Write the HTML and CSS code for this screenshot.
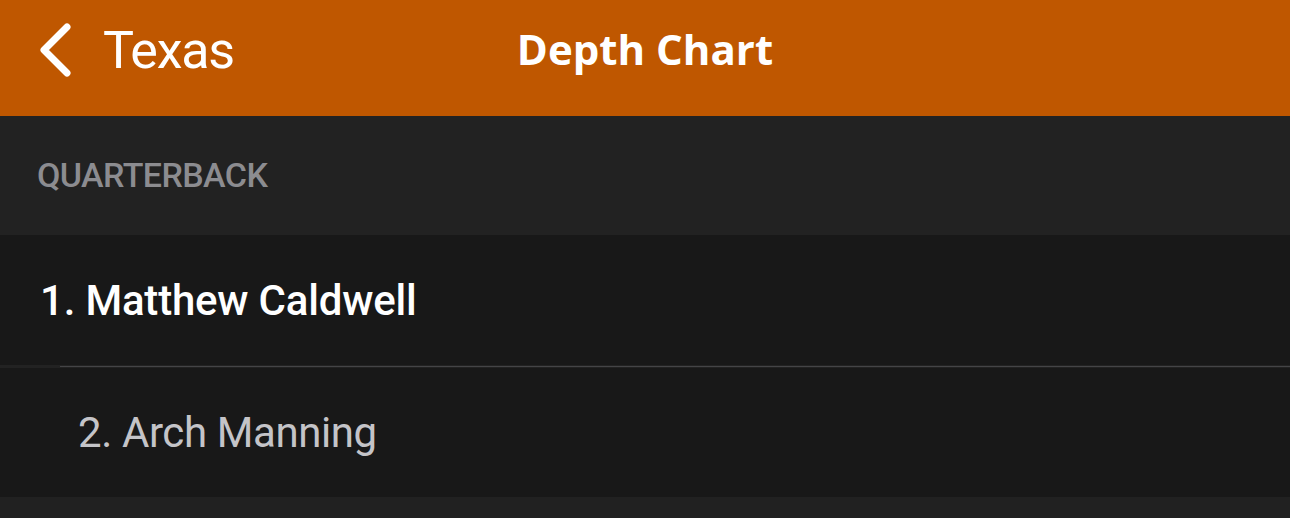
FILE: index.html
```html
<!DOCTYPE html>
<html lang="en">
<head>
<meta charset="utf-8">
<title>Depth Chart</title>
<link rel="stylesheet" href="styles.css">
</head>
<body>
<div class="screen">
  <header class="nav">
    <div class="nav-back">
      <svg class="chevron" width="40" height="60" viewBox="0 0 40 60" aria-hidden="true">
        <path d="M31 6 L8 29 L31 52" fill="none" stroke="#ffffff" stroke-width="7" stroke-linecap="round" stroke-linejoin="round"/>
      </svg>
      <span class="nav-back-label">Texas</span>
    </div>
    <h1 class="nav-title">Depth Chart</h1>
    <div class="nav-spacer"></div>
  </header>
  <div class="section-head">QUARTERBACK</div>
  <ul class="list">
    <li class="row row-first">1. Matthew Caldwell</li>
    <li class="sep"><span class="sep-line"></span></li>
    <li class="row row-second">2. Arch Manning</li>
  </ul>
  <div class="footer"></div>
</div>
</body>
</html>
```

FILE: styles.css
```css
* { box-sizing: border-box; }
html, body {
  margin: 0;
  padding: 0;
  background: #212121;
}
body {
  font-family: Roboto, "Noto Sans", "Liberation Sans", sans-serif;
  width: 1290px;
  height: 518px;
  overflow: hidden;
}
.screen {
  display: flex;
  flex-direction: column;
  height: 518px;
}
.nav {
  height: 116px;
  background: #bf5700;
  display: grid;
  grid-template-columns: 1fr auto 1fr;
  align-items: start;
  padding-top: 21px;
  color: #ffffff;
}
.nav-back {
  display: flex;
  align-items: flex-start;
  padding-left: 36px;
}
.chevron {
  display: block;
}
.nav-back-label {
  font-size: 52px;
  line-height: 60px;
  font-weight: 400;
  margin-left: 27px;
  letter-spacing: -1.2px;
}
.nav-title {
  margin: -2px 0 0 0;
  font-family: "Open Sans", Roboto, sans-serif;
  font-size: 42px;
  line-height: 60px;
  font-weight: 700;
  letter-spacing: 0;
}
.section-head {
  height: 119px;
  background: #222222;
  padding: 39px 0 0 37px;
  font-size: 34px;
  line-height: 40px;
  color: #8c8c90;
  letter-spacing: -0.6px;
  font-weight: 500;
}
.list {
  list-style: none;
  margin: 0;
  padding: 0;
  background: #181818;
}
.row {
  font-size: 42px;
  line-height: 50px;
}
.row-first {
  height: 130px;
  padding: 41px 0 0 40px;
  color: #ffffff;
  font-weight: 500;
  letter-spacing: -0.2px;
}
.row-second {
  height: 129px;
  padding: 40px 0 0 78px;
  color: #c4c4c8;
  font-weight: 400;
  letter-spacing: -0.4px;
}
.sep {
  height: 3px;
  background: #222222;
  padding-left: 60px;
  display: flex;
  flex-direction: column;
  justify-content: flex-end;
  padding-bottom: 1px;
}
.sep-line {
  display: block;
  height: 1px;
  background: #444446;
}
.footer {
  flex: 1;
  background: #212121;
}
```
